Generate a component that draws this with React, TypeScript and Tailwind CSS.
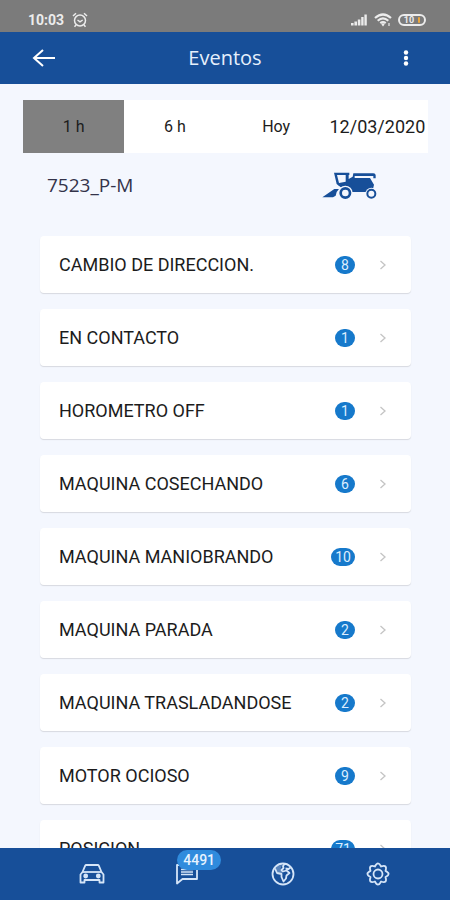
import { useState } from "react";
import clsx from "clsx";

const ranges = ["1 h", "6 h", "Hoy", "12/03/2020"];

const events = [
  { name: "CAMBIO DE DIRECCION.", count: 8 },
  { name: "EN CONTACTO", count: 1 },
  { name: "HOROMETRO OFF", count: 1 },
  { name: "MAQUINA COSECHANDO", count: 6 },
  { name: "MAQUINA MANIOBRANDO", count: 10 },
  { name: "MAQUINA PARADA", count: 2 },
  { name: "MAQUINA TRASLADANDOSE", count: 2 },
  { name: "MOTOR OCIOSO", count: 9 },
  { name: "POSICION", count: 71 },
];

function StatusBar() {
  return (
    <div className="flex h-8 shrink-0 items-end justify-between bg-[#7b7b7b] pr-6 pb-1 pl-7 text-[#ececec]">
      <div className="flex items-center gap-2">
        <span className="text-sm leading-4 font-bold">10:03</span>
        <svg className="size-4" viewBox="0 0 16 16" fill="none" stroke="currentColor" strokeWidth="1.5">
          <circle cx="8" cy="8.5" r="5.5" />
          <path d="M1 4l3-2.8M15 4l-3-2.8M5.5 8l2.5 1.8L10.7 8M4 13l-1.5 1.7M12 13l1.5 1.7" />
        </svg>
      </div>
      <div className="flex items-center gap-1.5">
        <svg className="h-4 w-[18px]" viewBox="0 0 18 16" fill="currentColor">
          <path d="M1 11h2.6v2.5H1zM4.4 9.5H7v4H4.4zM7.8 7.5h2.6v6H7.8zM11.2 5h2.4v8.5h-2.4zM14.4 2.5h2.4v11h-2.4z" />
        </svg>
        <svg className="h-4 w-[18px]" viewBox="0 0 18 16" fill="none" stroke="currentColor" strokeWidth="2.2">
          <path d="M1 6Q9-1 17 6M3.7 8.7Q9 4 14.3 8.7M6.3 11.2Q9 9 11.7 11.2" />
          <path d="M9 11l1.6 1.6L9 14.5l-1.6-1.9z" fill="currentColor" stroke="none" />
          <path d="M15 11v3" strokeWidth="1.2" />
        </svg>
        <div className="flex h-3 w-7 items-center justify-center rounded-full border-2 border-current">
          <span className="text-[9px] leading-none font-bold">10</span>
          <span className="ml-1 h-1.5 w-0.5 rounded bg-[#eba63c]" />
        </div>
      </div>
    </div>
  );
}

function Harvester() {
  return (
    <svg className="h-7 w-14" viewBox="6 9 168 84" fill="#174f99" role="img" aria-label="Cosechadora">
      {/* cab, body and auger */}
      <path d="M42 14h46v7h-2v12l12-7 2-10h60q7 0 7 6v9h-7v-7h-56v6h46l12 20-5 22H80L50 48z" />
      <path d="M51 21h26v20l-20 4z" fill="#f4f7fe" />
      {/* header */}
      <path d="M7 88l36-25h14l-7 9-3 11-8 5z" />
      <circle cx="76" cy="75" r="22" fill="#f4f7fe" />
      <path d="M50 45h40l14 12-7 4q-18-17-40-8z" />
      <g fill="#f4f7fe" stroke="#174f99">
        <circle cx="76" cy="75" r="14" strokeWidth="8" />
        <circle cx="154" cy="77" r="18" stroke="none" />
        <circle cx="154" cy="77" r="12" strokeWidth="6" />
      </g>
    </svg>
  );
}

function CarIcon() {
  return (
    <svg className="size-7" viewBox="0 0 28 28" fill="none" stroke="currentColor" strokeWidth="1.8" strokeLinejoin="round">
      <path d="M2.5 14.5L4.5 12l2.7-6.4q.3-.6 1-.6h11.6q.7 0 1 .6L23.500 12l2 2.500v8h-4V20h-15v2.500h-4z" />
      <path d="M4.5 12h19" />
      <circle cx="7.7" cy="16" r="1.5" fill="currentColor" />
      <circle cx="20.3" cy="16" r="1.5" fill="currentColor" />
    </svg>
  );
}

function ChatIcon() {
  return (
    <svg className="size-7" viewBox="0 0 28 28" fill="none" stroke="currentColor" strokeWidth="1.8" strokeLinejoin="round">
      <path d="M4 5h20v14H9.5L4 23.5z" />
      <path d="M8 9.5h12M8 12h12M8 14.5h12" strokeWidth="1.4" />
    </svg>
  );
}

function GlobeIcon() {
  return (
    <svg className="size-7" viewBox="0 0 28 28" fill="none" stroke="currentColor" strokeWidth="1.8" strokeLinejoin="round">
      <circle cx="14" cy="14" r="10.5" />
      <path d="M6 8.5l2 4.5 4.5 1v3l2 4.5 2.5-3 .5-3 3-2.500-3-2.500-3.500 1-1.500-1.500 2-2-.5-2 2-2.500M16.500 8.500l3 .5 2-1.500" />
      <path d="M5.5 8.5l2.5 5 4.5 1 1-3.500-2-2 1.500-4-3.500.5z" fill="currentColor" fillOpacity=".35" stroke="none" />
    </svg>
  );
}

function GearIcon() {
  return (
    <svg className="size-7" viewBox="0 0 28 28" fill="none" stroke="currentColor" strokeWidth="1.8" strokeLinejoin="round">
      <path d="M10.9 6.5Q14 .3 17.100 6.500Q23.700 4.300 21.500 10.900Q27.700 14 21.500 17.100Q23.700 23.700 17.100 21.500Q14 27.700 10.900 21.500Q4.300 23.700 6.500 17.100Q.3 14 6.500 10.900Q4.300 4.300 10.900 6.500z" />
      <circle cx="14" cy="14" r="4.5" />
    </svg>
  );
}

function EventRow({ name, count }: { name: string; count: number }) {
  return (
    <li>
      <button
        type="button"
        className="flex h-[57px] w-full items-center rounded-sm bg-white pr-6 pl-[19px] text-left shadow-[0_1px_1px_rgba(0,0,0,0.12)]">
        <span className="flex-1 text-lg">{name}</span>
        <span className="min-w-5 rounded-full bg-[#1679cb] px-1 text-center text-sm leading-[18px] text-[#dceeff]">
          {count}
        </span>
        <svg className="ml-6 h-2.5 w-2" viewBox="0 0 8 10" fill="none" stroke="#c4c4c4" strokeWidth="1.3">
          <path d="M1.5 1l4.5 4-4.5 4" />
        </svg>
      </button>
    </li>
  );
}

export default function App() {
  const [range, setRange] = useState(ranges[0]);

  return (
    <div className="flex h-screen flex-col bg-[#f4f7fe] font-[Roboto,sans-serif] text-[#1c1c1c]">
      <StatusBar />

      <header className="flex h-[52px] shrink-0 items-center justify-between bg-[#174f99] px-8 text-white">
        <button type="button" aria-label="Volver">
          <svg className="size-6" viewBox="0 0 24 24" fill="none" stroke="currentColor" strokeWidth="2">
            <path d="M23 12H2M11 4l-9 8 9 8" />
          </svg>
        </button>
        <h1 className="font-['Open_Sans',sans-serif] text-xl text-[#e6f0fc]">Eventos</h1>
        <button type="button" aria-label="Menú" className="flex w-6 justify-center">
          <svg className="h-4 w-1.5" viewBox="0 0 6 16" fill="currentColor">
            <circle cx="3" cy="2.5" r="2.2" />
            <circle cx="3" cy="8" r="2.2" />
            <circle cx="3" cy="13.5" r="2.2" />
          </svg>
        </button>
      </header>

      <main className="min-h-0 flex-1 overflow-hidden">
        <div className="mr-[22px] ml-[23px] mt-4 grid h-[53px] grid-cols-4 bg-white">
          {ranges.map((r, i) => (
            <button
              key={r}
              type="button"
              aria-pressed={r === range}
              onClick={() => setRange(r)}
              className={clsx(
                "whitespace-nowrap",
                i === 3 ? "text-lg" : "text-base",
                r === range && "bg-[#808080]"
              )}>
              {r}
            </button>
          ))}
        </div>

        <div className="flex h-16 items-center justify-between pr-[72px] pl-[47px]">
          <h2 className="font-['Open_Sans',sans-serif] text-[19px] text-[#33334a]">7523_P-M</h2>
          <Harvester />
        </div>

        <ul className="mr-[39px] ml-10 mt-[19px] flex flex-col gap-4">
          {events.map((e) => (
            <EventRow key={e.name} name={e.name} count={e.count} />
          ))}
        </ul>
      </main>

      <nav className="flex h-[52px] shrink-0 items-center justify-around bg-[#174f99] pr-6 pl-11 text-[#d5e5f8]">
        <a href="#maquinas" aria-label="Máquinas">
          <CarIcon />
        </a>
        <a href="#mensajes" aria-label="Mensajes" className="relative">
          <ChatIcon />
          <span className="absolute -top-2.5 left-1 rounded-full bg-[#2f8bdd] px-1.5 text-sm leading-5 font-medium text-[#e6f3ff]">
            4491
          </span>
        </a>
        <a href="#mapa" aria-label="Mapa">
          <GlobeIcon />
        </a>
        <a href="#ajustes" aria-label="Ajustes">
          <GearIcon />
        </a>
      </nav>
    </div>
  );
}
